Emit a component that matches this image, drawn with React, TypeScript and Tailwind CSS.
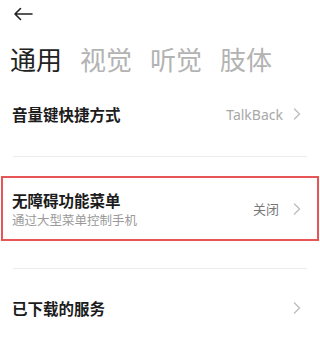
import type { ReactNode } from "react";

const FONT = { fontFamily: '"Noto Sans CJK SC", "Noto Sans", sans-serif' };

function Chevron() {
  return (
    <svg width="8" height="12" viewBox="0 0 8 12" fill="none" className="shrink-0">
      <path d="M1.5 1 L6.5 6 L1.5 11" stroke="#bdbdbd" strokeWidth="1.4" strokeLinecap="round" strokeLinejoin="round" />
    </svg>
  );
}

function Row({ title, sub, value, cls }: { title: string; sub?: string; value?: ReactNode; cls: string }) {
  return (
    <div className={`flex items-center ${cls}`}>
      <div className="flex flex-1 flex-col">
        <span className="text-[15.5px] font-bold leading-[20px] text-[#1c1c1c]">{title}</span>
        {sub && <span className="mt-[2px] text-[12.5px] leading-[16px] text-[#9a9a9a]">{sub}</span>}
      </div>
      {value}
      <Chevron />
    </div>
  );
}

export default function App() {
  const tabs = ["通用", "视觉", "听觉", "肢体"];
  return (
    <div className="h-[353px] w-[320px] overflow-hidden bg-white" style={FONT}>
      <div className="flex h-[27px] items-center pl-[13px]">
        <svg width="20" height="14" viewBox="0 0 20 14" fill="none">
          <path d="M19 7 H2 M7.5 1.5 L2 7 L7.5 12.5" stroke="#222" strokeWidth="1.6" strokeLinecap="round" strokeLinejoin="round" />
        </svg>
      </div>
      <div className="mt-[17px] flex gap-[18px] pl-[10px]">
        {tabs.map((t, i) => (
          <span
            key={t}
            className={`text-[26px] leading-[30px] ${i === 0 ? "text-[#222]" : "text-[#b3b3b3]"}`}
          >
            {t}
          </span>
        ))}
      </div>
      <Row
        title="音量键快捷方式"
        cls="h-[44px] mt-[18px] pl-[12px] pr-[19px]"
        value={<span className="mr-[10px] text-[14px] text-[#a8a8a8]" style={{ fontFamily: '"Noto Sans", sans-serif' }}>TalkBack</span>}
      />
      <div className="mx-[13px] mt-[20px] h-px bg-[#ececec]" />
      <div className="mx-[1px] mt-[19px] h-[65px] border-2 border-[#e65656]">
        <Row
          title="无障碍功能菜单"
          sub="通过大型菜单控制手机"
          cls="h-full pl-[9px] pr-[16px]"
          value={<span className="mr-[14px] text-[13px] text-[#777]">关闭</span>}
        />
      </div>
      <div className="mx-[13px] mt-[27px] h-px bg-[#ececec]" />
      <Row title="已下载的服务" cls="h-[40px] mt-[19px] pl-[12px] pr-[19px]" />
    </div>
  );
}
